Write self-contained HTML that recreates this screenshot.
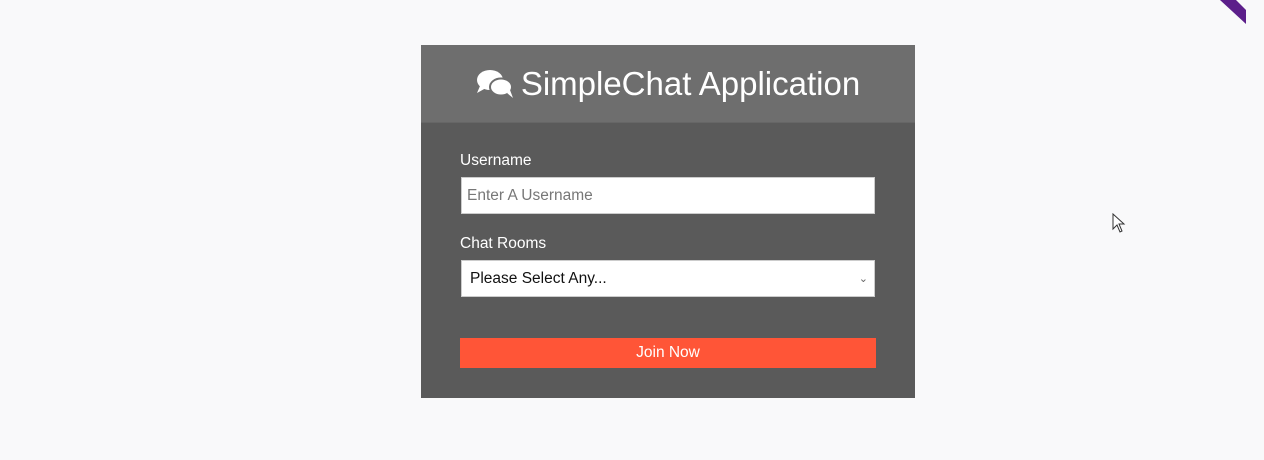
<!DOCTYPE html>
<html><head><style>
body{margin:0;width:1264px;height:460px;background:#f9f9fa;position:relative;overflow:hidden;font-family:"Liberation Sans",sans-serif}
.card{position:absolute;left:421px;top:45px;width:494px;height:353px;background:#5a5a5a}
.hd{height:77px;background:#6e6e6e;color:#fff;font-size:33px;display:flex;align-items:center;justify-content:center;gap:7px;border-bottom:1px solid #666}
.lbl{position:absolute;left:39px;color:#fff;font-size:15.5px}
.inp{position:absolute;left:40px;width:414px;height:37px;background:#fff;box-sizing:border-box;border:1px solid #ccc;font-size:15.5px;display:flex;align-items:center;padding-left:5px}
.btn{position:absolute;left:39px;top:293px;width:416px;height:30px;background:#ff5537;color:#fff;font-size:15.5px;display:flex;align-items:center;justify-content:center}
</style></head><body>
<svg style="position:absolute;left:1210px;top:0" width="54" height="30"><polygon points="10,0 26,0 36,10 36,24" fill="#5c1f8a"/></svg>
<div class="card">
<div class="hd"><svg width="38" height="30" viewBox="0 0 38 30"><ellipse cx="14" cy="11" rx="13" ry="10" fill="#fff"/><path d="M4 17 L1 24 L10 19Z" fill="#fff"/><ellipse cx="25" cy="18" rx="11" ry="8.5" fill="#fff" stroke="#6e6e6e" stroke-width="2"/><path d="M31 24 L37 29 L34 21Z" fill="#fff"/></svg><span>SimpleChat Application</span></div>
<div class="lbl" style="top:107px">Username</div>
<div class="inp" style="top:132px;color:#777">Enter A Username</div>
<div class="lbl" style="top:190px">Chat Rooms</div>
<div class="inp" style="top:215px;color:#111;padding-left:8px">Please Select Any...<span style="position:absolute;right:6px;font-size:11px;color:#666">&#8964;</span></div>
<div class="btn">Join Now</div>
</div>
<svg style="position:absolute;left:1112px;top:213px" width="14" height="22"><path d="M1 1 L1 16 L5 12 L8 19 L10 18 L7 11 L12 11Z" fill="#fff" stroke="#333"/></svg>
</body></html>
